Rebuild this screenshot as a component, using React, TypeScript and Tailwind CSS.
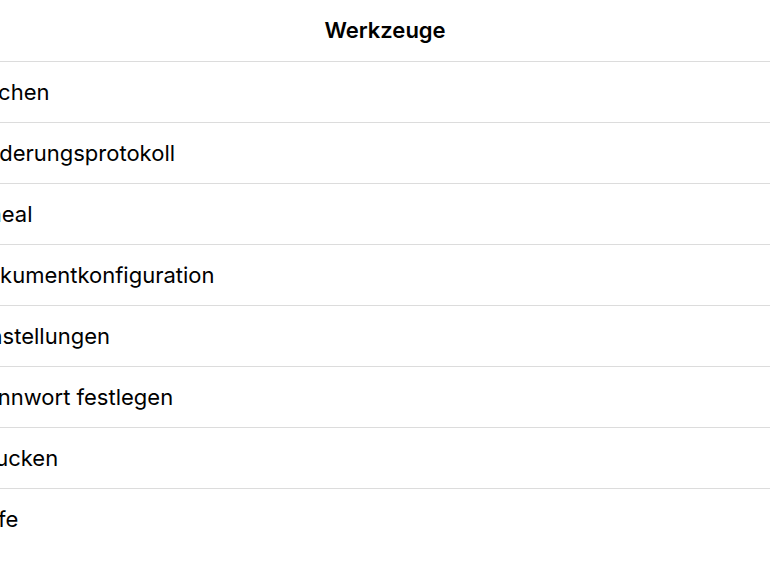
const items = [
  "Suchen",
  "Änderungsprotokoll",
  "Lineal",
  "Dokumentkonfiguration",
  "Einstellungen",
  "Kennwort festlegen",
  "Drucken",
  "Hilfe",
];

const App = () => {
  return (
    <div
      className="h-[578px] w-full overflow-hidden bg-white text-black"
      style={{ fontFamily: "Inter, 'Liberation Sans', sans-serif" }}
    >
      <div className="flex h-[62px] items-center justify-center border-b border-[#dcdcdc]">
        <h1 className="text-[22px] font-semibold">Werkzeuge</h1>
      </div>
      <ul className="ml-[-29px]">
        {items.map((label, i) => (
          <li
            key={label}
            className={`flex h-[61px] items-center text-[22px] ${i < items.length - 1 ? "border-b border-[#dcdcdc]" : ""}`}
          >
            {label}
          </li>
        ))}
      </ul>
    </div>
  );
};

export default App;
